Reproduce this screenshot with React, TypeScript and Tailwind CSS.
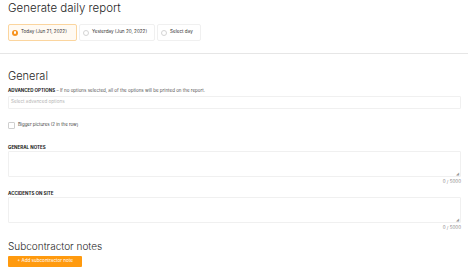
import React from "react";

function Radio({ checked }: { checked?: boolean }) {
  return checked ? (
    <span className="w-[6px] h-[6px] rounded-full bg-[#f7931e] flex items-center justify-center">
      <span className="w-[2.5px] h-[2.5px] rounded-full bg-white" />
    </span>
  ) : (
    <span className="w-[6px] h-[6px] rounded-full border border-[#d4d4d4] bg-white" />
  );
}

export default function App() {
  return (
    <div className="w-[468px] h-[275px] bg-white overflow-hidden text-[#222]" style={{ fontFamily: "Inter, 'Noto Sans', sans-serif" }}>
      <div className="px-[8px]">
        <h1 className="text-[11.5px] leading-[14px] pt-[1px] text-[#1f1f1f] font-light">Generate daily report</h1>
        <div className="flex gap-[2px] mt-[9px] h-[17px]">
          <div className="flex items-center gap-[3px] px-[3px] w-[69px] border border-[#fbd59e] bg-[#fffaf3] rounded-[2px] text-[4.6px] text-[#333]">
            <Radio checked />
            <span>Today (Jun 21, 2022)</span>
          </div>
          <div className="flex items-center gap-[3px] px-[3px] w-[76px] border border-[#f0f0f0] rounded-[2px] text-[4.6px] text-[#333]">
            <Radio />
            <span>Yesterday (Jun 20, 2022)</span>
          </div>
          <div className="flex items-center gap-[3px] px-[3px] w-[44px] border border-[#f0f0f0] rounded-[2px] text-[4.6px] text-[#333]">
            <Radio />
            <span>Select day</span>
          </div>
        </div>
      </div>
      <div className="mt-[12px] border-t border-[#e6e6e6]" />
      <div className="px-[8px]">
        <h2 className="mt-[16px] text-[11px] leading-[12px] text-[#1f1f1f] font-light">General</h2>
        <div className="mt-[6px] text-[4.5px] leading-[5px] text-[#555]">
          <span className="font-bold text-[#222]">ADVANCED OPTIONS</span> – If no options selected, all of the options will be printed on the report.
        </div>
        <div className="mt-[3px] h-[13px] w-[453px] border border-[#f0f0f0] rounded-[1px] flex items-center px-[2px] text-[4.6px] text-[#b5b5b5]">
          Select advanced options
        </div>
        <div className="mt-[13px] flex items-center gap-[3px] h-[7px]">
          <span className="w-[7px] h-[7px] border border-[#cfcfcf] rounded-[1px]" />
          <span className="text-[4.4px] text-[#444]">Bigger pictures (2 in the row)</span>
        </div>
        <div className="mt-[16px] text-[4.5px] leading-[5px] font-bold text-[#222]">GENERAL NOTES</div>
        <div className="mt-[1px] h-[26px] w-[453px] border border-[#f0f0f0] rounded-[1px] relative">
          <span className="absolute right-[1px] bottom-[0px] text-[4px] leading-[4px] text-[#999]">◢</span>
        </div>
        <div className="w-[453px] text-right text-[4.5px] leading-[6px] text-[#888] mt-[2px]">0 / 5000</div>
        <div className="mt-[6px] text-[4.5px] leading-[5px] font-bold text-[#222]">ACCIDENTS ON SITE</div>
        <div className="mt-[1px] h-[26px] w-[453px] border border-[#f0f0f0] rounded-[1px] relative">
          <span className="absolute right-[1px] bottom-[0px] text-[4px] leading-[4px] text-[#999]">◢</span>
        </div>
        <div className="w-[453px] text-right text-[4.5px] leading-[6px] text-[#888] mt-[2px]">0 / 5000</div>
        <h2 className="mt-[10px] text-[10px] leading-[11px] text-[#1f1f1f] font-light">Subcontractor notes</h2>
        <button className="mt-[4px] h-[11px] w-[74px] bg-[#ff9a0e] rounded-[1px] text-white text-[4.6px] flex items-center justify-center">
          + Add subcontractor note
        </button>
      </div>
    </div>
  );
}
